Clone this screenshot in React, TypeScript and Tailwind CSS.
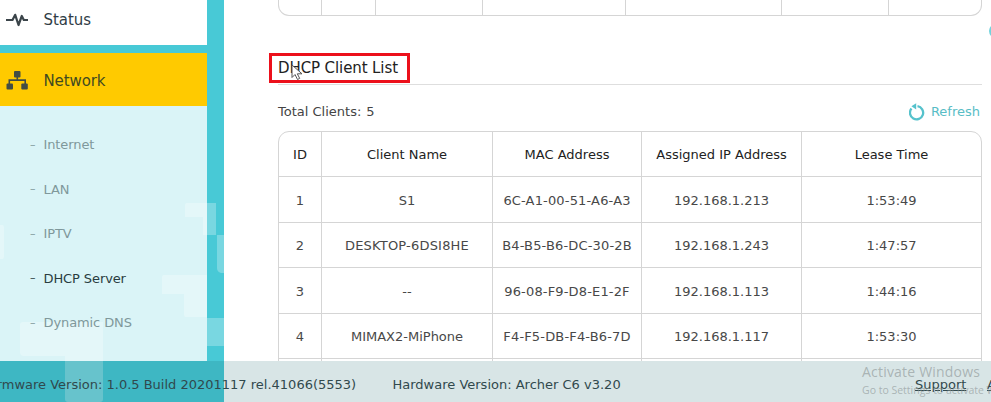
const clients = [
  ['1', 'S1', '6C-A1-00-51-A6-A3', '192.168.1.213', '1:53:49'],
  ['2', 'DESKTOP-6DSI8HE', 'B4-B5-B6-DC-30-2B', '192.168.1.243', '1:47:57'],
  ['3', '--', '96-08-F9-D8-E1-2F', '192.168.1.113', '1:44:16'],
  ['4', 'MIMAX2-MiPhone', 'F4-F5-DB-F4-B6-7D', '192.168.1.117', '1:53:30'],
];
const headings = ['ID', 'Client Name', 'MAC Address', 'Assigned IP Address', 'Lease Time'];
const links = ['Internet', 'LAN', 'IPTV', 'DHCP Server', 'Dynamic DNS'];

function PixelPattern() {
  return (
    <svg className="absolute inset-0" width="224" height="402" fill="#fff" fillOpacity=".27">
      <path d="M187 203h29v32h-13v-18h-18v-12q0-2 2-2z" />
      <path d="M217 235h8v38h-4q-4-1-4-5z" />
      <path d="M164 275h43v42h-21q-2 0-2-3v-20h-22v-17q0-2 2-2z" />
      <path d="M207 318h18v28h-18z" />
      <path d="M23 322h80v77q0 3-3 3H68q-3 0-3-3v-43H24q-4 0-4-4v-27q0-3 3-3z" />
      <path d="M0 225h2q2 0 2 3v28q0 3-2 3H0z" />
    </svg>
  );
}

function Sidebar() {
  return (
    <aside className="relative h-full w-[224px] shrink-0 bg-[#48c9d6]">
      <PixelPattern />
      <nav className="relative flex h-[361px] w-[207px] flex-col">
        <div className="mb-[8px] flex h-[45px] shrink-0 items-center bg-white pb-[6px] text-[#303d46]">
          <svg className="ml-[6px]" width="22" height="16" viewBox="0 0 22 16" fill="none" stroke="#3b454a" strokeWidth="2.2" strokeLinejoin="round">
            <path d="M0 8h6.5L9.2 2.8 12.5 13l3.3-9 2 4H22" />
          </svg>
          <span className="ml-[15.5px] text-[15px] leading-5 tracking-[-.05px]">Status</span>
        </div>
        <div className="flex h-[53px] shrink-0 items-center bg-[#ffca00] text-[#3f4a20]">
          <svg className="mt-[2px] ml-[6px]" width="22" height="19" viewBox="0 0 22 19" fill="#424d44">
            <rect x="8" y="0" width="6.5" height="6.5" rx="1" />
            <rect x="0.5" y="12.5" width="6.5" height="6" rx="1" />
            <rect x="15.3" y="12.5" width="6.5" height="6" rx="1" />
            <path d="M10.5 6h1.6v2.3H20V13h-1.6V9.9H4.1V13H2.5V8.3h8z" />
          </svg>
          <span className="ml-[15.5px] pt-[2px] text-[15px] leading-5 tracking-[-.1px]">Network</span>
        </div>
        <ul className="flex grow flex-col bg-white/80 pt-[17px] text-[13px] tracking-[-.1px]">
          {links.map((name) => (
            <li key={name} className={`flex h-[44.4px] shrink-0 items-center pl-[30px] ${name === 'DHCP Server' ? 'text-[#293c40]' : 'text-[#7f989b]'}`}>
              <span className="w-[13.5px] text-[11px]">–</span>
              <span>{name}</span>
            </li>
          ))}
        </ul>
      </nav>
    </aside>
  );
}

function Refresh() {
  return (
    <div className="flex items-center text-[13px] text-[#58bdc6]">
      <svg className="mr-[6px]" width="16" height="18" viewBox="0 0 16 18" fill="none" stroke="#56c2cc" strokeWidth="2.3">
        <path d="M8.5 3.2A6.6 6.6 0 1 1 2.5 5.5" />
        <path d="M7.2.2v6.2L2.4 3.2z" fill="#56c2cc" stroke="none" />
      </svg>
      <span>Refresh</span>
    </div>
  );
}

export default function App() {
  return (
    <div className="relative flex h-[402px] w-[991px] overflow-hidden bg-white font-['DejaVu_Sans',Verdana,sans-serif]">
      <Sidebar />
      <main className="ml-[54px] flex h-[361px] w-[704px] flex-col overflow-y-clip text-[13px]">
        <div className="grid h-[16px] shrink-0 grid-cols-[43px_54px_107px_143px_156px_107px_1fr] divide-x divide-[#d5d5d5] rounded-b-[11px] border border-t-0 border-[#d5d5d5]">
          <i /><i /><i /><i /><i /><i /><i />
        </div>
        <div className="mt-[37px] flex h-[32px] shrink-0 items-start border-b border-[#dedede]">
          <div className="relative -ml-[9px] flex h-[30px] w-[141px] items-center border-[3px] border-[#ec101b] pl-[6px]">
            <h2 className="text-[15px] leading-5 tracking-[-.1px] whitespace-nowrap text-[#222]">DHCP Client List</h2>
            <svg className="absolute left-[19px] top-[8px]" width="13" height="17" viewBox="0 0 13 17">
              <path d="M1 1v12.5l3-3 2.5 5 2.2-1.1-2.4-4.6h4.7z" fill="#fff" stroke="#555" strokeWidth="1" />
            </svg>
          </div>
        </div>
        <div className="flex h-[46px] shrink-0 items-center justify-between pr-[2px] text-[#444]">
          <span className="pt-[7px]">Total Clients:<span className="ml-[5px]">5</span></span>
          <div className="pt-[8px]"><Refresh /></div>
        </div>
        <section className="shrink-0 rounded-t-[11px] border border-[#d5d5d5]">
          {[headings, ...clients].map((row, r) => (
            <div key={r} className={`grid grid-cols-[43px_171px_149px_160px_1fr] divide-x divide-[#d5d5d5] border-b border-[#d5d5d5] ${r === 0 ? 'h-[45px] text-[#222]' : 'h-[45.6px] text-[#484848]'}`}>
              {row.map((cell, c) => (
                <div key={c} className={`flex items-center justify-center pt-[2px] whitespace-nowrap ${c === 2 && r > 0 ? 'tracking-[.16px]' : ''} ${cell === 'DESKTOP-6DSI8HE' ? 'tracking-[.2px]' : ''}`}>{cell}</div>
              ))}
            </div>
          ))}
          <div className="grid h-[10px] grid-cols-[43px_171px_149px_160px_1fr] divide-x divide-[#d5d5d5]"><i /><i /><i /><i /><i /></div>
        </section>
      </main>
      <div className="absolute top-[24px] left-[989px] size-[14px] rounded-full bg-[#72d4dd]" />
      <footer className="absolute bottom-0 left-0 flex h-[41px] w-[991px] items-center bg-[#0a5d62]/16 pt-[6px] text-[13px] whitespace-nowrap text-[#31494d]">
        <span className="-ml-[7px] w-[399.5px] shrink-0">irmware Version: 1.0.5 Build 20201117 rel.41066(5553)</span>
        <span className="w-[522.5px] shrink-0">Hardware Version: Archer C6 v3.20</span>
        <span className="w-[72px] shrink-0 underline">Support</span>
        <span className="underline">App</span>
      </footer>
      <div className="absolute top-[362px] left-[862px] font-['Open_Sans',sans-serif] whitespace-nowrap text-[#8f9798]/65">
        <div className="text-[14px] leading-[20px] tracking-[.2px]">Activate Windows</div>
        <div className="text-[10.5px] leading-[16px]">Go to Settings to activate Windows.</div>
      </div>
    </div>
  );
}
